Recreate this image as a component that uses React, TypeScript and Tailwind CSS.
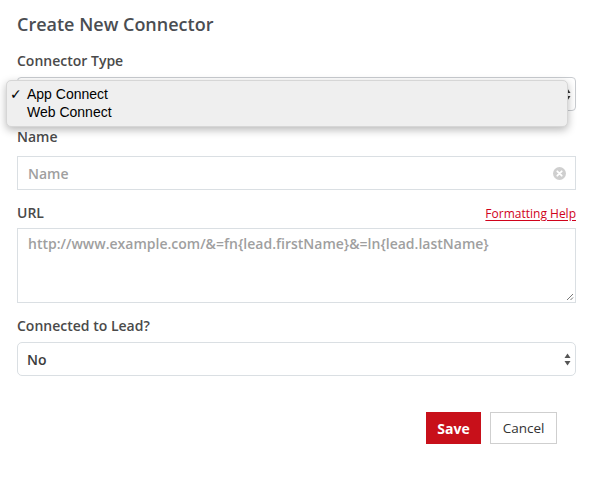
import React from "react";

const Arrows = ({ className }: { className?: string }) => (
  <svg className={className} width="7" height="13" viewBox="0 0 7 13" fill="currentColor">
    <path d="M3.5 0.5 L6.5 5 L0.5 5 Z" />
    <path d="M0.5 8 L6.5 8 L3.5 12.5 Z" />
  </svg>
);

export default function App() {
  return (
    <div
      className="relative w-[592px] h-[482px] bg-white pl-[17px] pr-[16px] text-[#4a4a4a]"
      style={{ fontFamily: '"Open Sans", "Liberation Sans", sans-serif' }}
    >
      <div className="pt-[12px] text-[18px] leading-[24px] font-semibold text-[#4a4d52]">
        Create New Connector
      </div>

      <div className="mt-[15px] text-[14px] leading-[20px] font-semibold">Connector Type</div>
      <div className="mt-[6px] h-[34px] rounded-[4px] border border-[#c9ccd0] flex items-center justify-end pr-[4px]">
        <Arrows className="text-[#333]" />
      </div>

      <div className="mt-[16px] text-[14px] leading-[20px] font-semibold">Name</div>
      <div className="mt-[9px] h-[34px] border border-[#dadfe3] flex items-center justify-between pl-[10px] pr-[9px]">
        <span className="text-[14px] font-semibold text-[#9f9f9f]">Name</span>
        <svg width="13" height="13" viewBox="0 0 13 13">
          <circle cx="6.5" cy="6.5" r="6.5" fill="#cfcfcf" />
          <path d="M4.3 4.3 L8.7 8.7 M8.7 4.3 L4.3 8.7" stroke="#fff" strokeWidth="1.8" strokeLinecap="round" />
        </svg>
      </div>

      <div className="mt-[13px] flex items-baseline justify-between">
        <span className="text-[14px] leading-[20px] font-semibold">URL</span>
        <span className="text-[12px] leading-[20px] text-[#d0021b] underline underline-offset-[2px]">
          Formatting Help
        </span>
      </div>
      <div className="relative mt-[4px] h-[75px] border border-[#dadfe3] pl-[10px] pt-[2px]">
        <span className="text-[14px] leading-[20px] font-semibold text-[#9f9f9f]">
          http://www.example.com/&amp;=fn{"{"}lead.firstName{"}"}&amp;=ln{"{"}lead.lastName{"}"}
        </span>
        <svg className="absolute right-[1px] bottom-[1px]" width="9" height="9" viewBox="0 0 9 9">
          <path d="M8 2 L2 8 M8 5.5 L5.5 8" stroke="#777" strokeWidth="1" />
        </svg>
      </div>

      <div className="mt-[13px] text-[14px] leading-[20px] font-semibold">Connected to Lead?</div>
      <div className="mt-[6px] h-[34px] rounded-[5px] border border-[#dadfe3] flex items-center justify-between pl-[9px] pr-[4px]">
        <span className="text-[14px] font-semibold text-[#3c3c3c]">No</span>
        <Arrows className="text-[#555]" />
      </div>

      <div className="mt-[36px] flex justify-end gap-[9px] pr-[19px]">
        <div className="h-[32px] w-[55px] bg-[#c8101a] text-white text-[14px] font-bold flex items-center justify-center">
          Save
        </div>
        <div className="h-[32px] w-[67px] border border-[#cfcfcf] text-[#333] text-[13.5px] flex items-center justify-center">
          Cancel
        </div>
      </div>

      <div
        className="absolute left-[6px] top-[80px] w-[562px] h-[47px] rounded-[5px] bg-[#efefef] border border-[#d6d6d6] shadow-[0_3px_8px_rgba(0,0,0,0.28)] pt-[4px] text-[14px] leading-[18px] text-black"
        style={{ fontFamily: '"Liberation Sans", "DejaVu Sans", sans-serif' }}
      >
        <div className="relative pl-[20px]">
          <span className="absolute left-[3px] top-0" style={{ fontFamily: '"DejaVu Sans", sans-serif', fontSize: "14px" }}>
            ✓
          </span>
          App Connect
        </div>
        <div className="pl-[20px]">Web Connect</div>
      </div>
    </div>
  );
}
